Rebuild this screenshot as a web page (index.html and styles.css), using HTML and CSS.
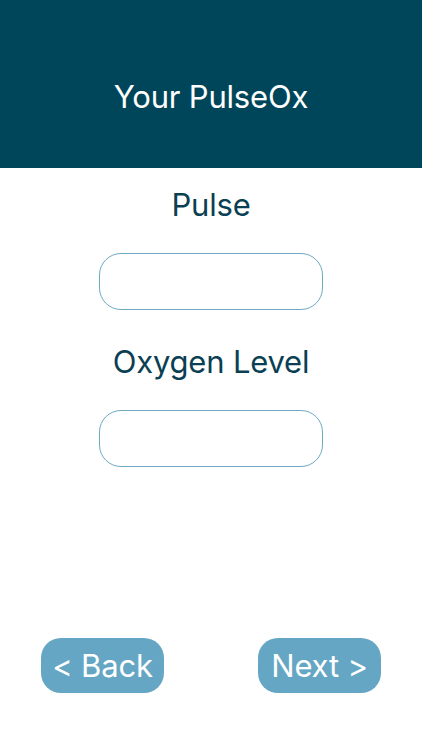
FILE: index.html
```html
<!DOCTYPE html>
<html lang="en">
<head>
    <meta charset="UTF-8">
    <meta name="viewport" content="width=device-width, initial-scale=1.0">
    <title>Your PulseOx</title>
    <link rel="stylesheet" href="styles.css">
</head>
<body>
    <div class="screen">
        <header class="top-bar">
            <h1>Your PulseOx</h1>
        </header>

        <main class="form">
            <label class="field-label" for="pulse">Pulse</label>
            <input class="field-input" id="pulse" type="text">

            <label class="field-label" for="oxygen">Oxygen Level</label>
            <input class="field-input" id="oxygen" type="text">
        </main>

        <div class="nav-buttons">
            <button class="nav-btn">&lt; Back</button>
            <button class="nav-btn">Next &gt;</button>
        </div>
    </div>
</body>
</html>
```

FILE: styles.css
```css
body {
    margin: 0;
    font-family: Inter, "Noto Sans", sans-serif;
    background: #fff;
}

.screen {
    display: flex;
    flex-direction: column;
    height: 750px;
}

.top-bar {
    height: 168px;
    background-color: #00465a;
    display: flex;
    justify-content: center;
    align-items: center;
    padding-top: 24px;
    box-sizing: border-box;
}

.top-bar h1 {
    margin: 0;
    color: #fff;
    font-size: 31px;
    font-weight: 400;
    letter-spacing: -0.2px;
}

.form {
    display: flex;
    flex-direction: column;
    align-items: center;
    padding-top: 18px;
}

.field-label {
    color: #0b3f53;
    font-size: 31px;
    line-height: 38px;
    letter-spacing: -0.2px;
    margin-bottom: 29px;
}

.field-input {
    width: 224px;
    height: 57px;
    box-sizing: border-box;
    border: 1px solid #6ea8c4;
    border-radius: 22px;
    background: #fff;
    margin: 0 0 33px;
    outline: none;
}

.nav-buttons {
    margin-top: auto;
    margin-bottom: 57px;
    display: flex;
    justify-content: space-between;
    padding: 0 41px;
}

.nav-btn {
    width: 123px;
    height: 55px;
    border: none;
    border-radius: 20px;
    background-color: #64a6c4;
    color: #fff;
    font-family: Inter, "Noto Sans", sans-serif;
    font-size: 31px;
    letter-spacing: -0.2px;
    padding: 0;
}
```
